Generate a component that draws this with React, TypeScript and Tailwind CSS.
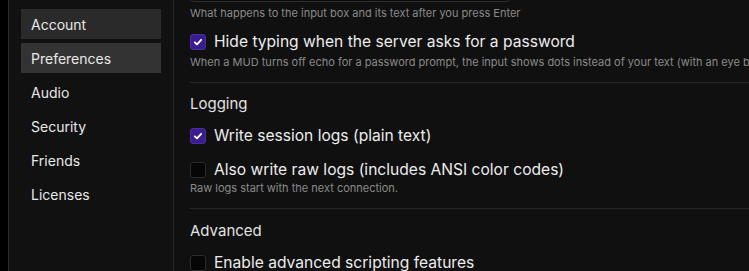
import type { ReactNode } from "react";

const navItems = ["Account", "Preferences", "Audio", "Security", "Friends", "Licenses"];

function Checkbox({ checked }: { checked: boolean }) {
  if (checked) {
    return (
      <span className="flex h-4 w-4 shrink-0 items-center justify-center rounded-[3px] border border-[#4a2ea0] bg-[#3b1c8c]">
        <svg width="10" height="10" viewBox="0 0 12 12" fill="none">
          <path d="M2.2 6.4 4.8 8.9 9.8 3.4" stroke="white" strokeWidth="2.2" strokeLinecap="round" strokeLinejoin="round" />
        </svg>
      </span>
    );
  }
  return <span className="h-4 w-4 shrink-0 rounded-[3px] border border-[#2c2c2c] bg-[#060606]" />;
}

function Row({ checked, children }: { checked: boolean; children: ReactNode }) {
  return (
    <label className="flex h-5 items-center gap-2 whitespace-nowrap text-[15.6px] leading-5 text-[#ececec]">
      <Checkbox checked={checked} />
      <span>{children}</span>
    </label>
  );
}

function Hint({ children }: { children: ReactNode }) {
  return <p className="whitespace-nowrap text-[11px] leading-4 text-[#8a8a8a]">{children}</p>;
}

export default function App() {
  return (
    <div className="flex h-[271px] w-[749px] overflow-hidden bg-black font-['Inter',sans-serif]">
      <div className="w-2 shrink-0 bg-black" />

      <div className="flex w-[166px] shrink-0 flex-col gap-1 border-x border-[#2a2a2a] bg-[#111111] px-3 pt-[9px]">
        {navItems.map((item) => (
          <div
            key={item}
            className={`flex h-[30px] items-center px-2.5 text-[14px] text-[#e8e8e8] ${
              item === "Account" ? "bg-[#2a2a2a]" : item === "Preferences" ? "bg-[#333333]" : ""
            }`}
          >
            {item}
          </div>
        ))}
      </div>

      <div className="min-w-0 flex-1 overflow-hidden bg-[#101010] pl-4">
        <div className="-mt-[30px] h-8 w-[320px] rounded border border-[#2e2e2e] bg-[#0b0b0b]" />
        <div className="mt-[3px]">
          <Hint>What happens to the input box and its text after you press Enter</Hint>
        </div>

        <div className="mt-[11px]">
          <Row checked>Hide typing when the server asks for a password</Row>
          <div className="mt-0.5">
            <Hint>
              When a MUD turns off echo for a password prompt, the input shows dots instead of your text (with an eye button to reveal it)
            </Hint>
          </div>
        </div>

        <div className="mt-3 h-px bg-[#262626]" />

        <h2 className="mt-[11px] text-[15px] leading-5 text-[#e2e2e2]">Logging</h2>
        <div className="mt-3">
          <Row checked>Write session logs (plain text)</Row>
        </div>
        <div className="mt-[14px]">
          <Row checked={false}>Also write raw logs (includes ANSI color codes)</Row>
          <Hint>Raw logs start with the next connection.</Hint>
        </div>

        <div className="mt-3 h-px bg-[#262626]" />

        <h2 className="mt-3 text-[15px] leading-5 text-[#e2e2e2]">Advanced</h2>
        <div className="mt-3">
          <Row checked={false}>Enable advanced scripting features</Row>
        </div>
      </div>
    </div>
  );
}
